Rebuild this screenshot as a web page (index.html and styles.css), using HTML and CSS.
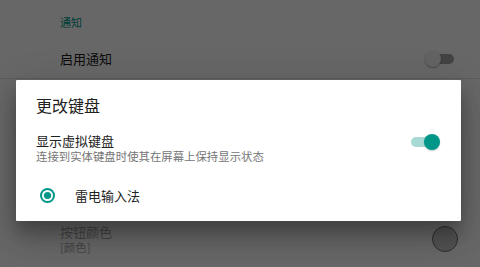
FILE: index.html
```html
<!DOCTYPE html>
<html lang="zh-CN">
<head>
<meta charset="utf-8">
<title>更改键盘</title>
<link rel="stylesheet" href="styles.css">
</head>
<body>
<div class="screen">
  <div class="prefs">
    <div class="category">通知</div>
    <div class="pref pref-first">
      <div class="pref-text"><div class="pref-title">启用通知</div></div>
      <span class="switch switch-off"><span class="track"></span><span class="thumb"></span></span>
    </div>
    <div class="pref pref-spacer"></div>
    <div class="pref pref-disabled">
      <div class="pref-text">
        <div class="pref-title">按钮颜色</div>
        <div class="pref-summary">[颜色]</div>
      </div>
      <span class="swatch"></span>
    </div>
  </div>
  <div class="scrim"></div>
  <div class="dialog">
    <div class="dialog-title">更改键盘</div>
    <div class="dialog-switch-row">
      <div class="dialog-text">
        <div class="dialog-item-title">显示虚拟键盘</div>
        <div class="dialog-item-summary">连接到实体键盘时使其在屏幕上保持显示状态</div>
      </div>
      <span class="switch switch-on"><span class="track"></span><span class="thumb"></span></span>
    </div>
    <div class="dialog-radio-row">
      <svg class="radio" width="15" height="15" viewBox="0 0 15 15">
        <circle cx="7.5" cy="7.5" r="6.5" fill="none" stroke="#009688" stroke-width="2"/>
        <circle cx="7.5" cy="7.5" r="3.6" fill="#009688"/>
      </svg>
      <span class="radio-label">雷电输入法</span>
    </div>
  </div>
</div>
</body>
</html>
```

FILE: styles.css
```css
html, body {
  margin: 0;
  padding: 0;
}
body {
  width: 480px;
  height: 267px;
  overflow: hidden;
  font-family: "Noto Sans CJK SC", "Noto Sans", sans-serif;
}
.screen {
  position: relative;
  width: 480px;
  height: 267px;
  overflow: hidden;
  background: #fafafa;
}
.prefs {
  display: flex;
  flex-direction: column;
}
.category {
  height: 40px;
  box-sizing: border-box;
  padding: 14px 0 0 60px;
  font-size: 11px;
  line-height: 16px;
  color: #009688;
}
.pref {
  display: flex;
  align-items: center;
  box-sizing: border-box;
  padding-left: 60px;
}
.pref-first {
  height: 39px;
  padding-right: 26px;
  border-bottom: 1px solid #e0e0e0;
}
.pref-text {
  flex: 1;
}
.pref-title {
  font-size: 13px;
  line-height: 16px;
  color: #212121;
}
.pref-summary {
  font-size: 11.4px;
  line-height: 14px;
  color: #757575;
}
.pref-spacer {
  height: 137px;
}
.pref-disabled {
  padding-top: 8px;
  padding-bottom: 8px;
  padding-right: 22px;
}
.pref-disabled .pref-title,
.pref-disabled .pref-summary {
  color: #a6a6a6;
}
.swatch {
  width: 24px;
  height: 24px;
  border-radius: 50%;
  background: #c8c8c8;
  border: 1.5px solid #6e6e6e;
}
.switch {
  position: relative;
  display: flex;
  align-items: center;
  width: 26px;
  height: 16px;
}
.track {
  width: 26px;
  height: 10px;
  border-radius: 5px;
}
.thumb {
  position: absolute;
  top: 0;
  width: 16px;
  height: 16px;
  border-radius: 50%;
  box-shadow: 0 1px 2px rgba(0, 0, 0, 0.35);
}
.switch-off .track {
  background: #a2a2a2;
}
.switch-off .thumb {
  left: -3px;
  background: #f1f1f1;
}
.switch-on .track {
  background: #a9d9d4;
}
.switch-on .thumb {
  right: -3px;
  background: #009688;
  box-shadow: 0 1px 1.5px rgba(0, 0, 0, 0.2);
}
.scrim {
  position: absolute;
  inset: 0;
  background: rgba(0, 0, 0, 0.59);
}
.dialog {
  position: absolute;
  left: 16px;
  top: 80px;
  width: 445px;
  height: 141px;
  box-sizing: border-box;
  background: #ffffff;
  border-radius: 1px;
  display: flex;
  flex-direction: column;
  box-shadow: 0 11px 15px rgba(0, 0, 0, 0.2), 0 20px 30px rgba(0, 0, 0, 0.14), 0 6px 40px rgba(0, 0, 0, 0.12);
}
.dialog-title {
  padding: 15px 20px 0;
  font-size: 16px;
  line-height: 20px;
  color: #212121;
}
.dialog-switch-row {
  display: flex;
  align-items: flex-start;
  margin-top: 17px;
  padding: 0 24.5px 0 20px;
  height: 32px;
}
.dialog-text {
  flex: 1;
}
.dialog-item-title {
  font-size: 13px;
  line-height: 17px;
  color: #212121;
}
.dialog-item-summary {
  font-size: 11.4px;
  line-height: 15px;
  color: #757575;
}
.dialog-switch-row .switch {
  margin-top: 2px;
}
.dialog-radio-row {
  display: flex;
  align-items: center;
  flex: 1;
  padding: 6px 0 0 23.5px;
  gap: 20.5px;
}
.radio {
  display: block;
}
.radio-label {
  font-size: 13px;
  line-height: 17px;
  color: #212121;
}
```
